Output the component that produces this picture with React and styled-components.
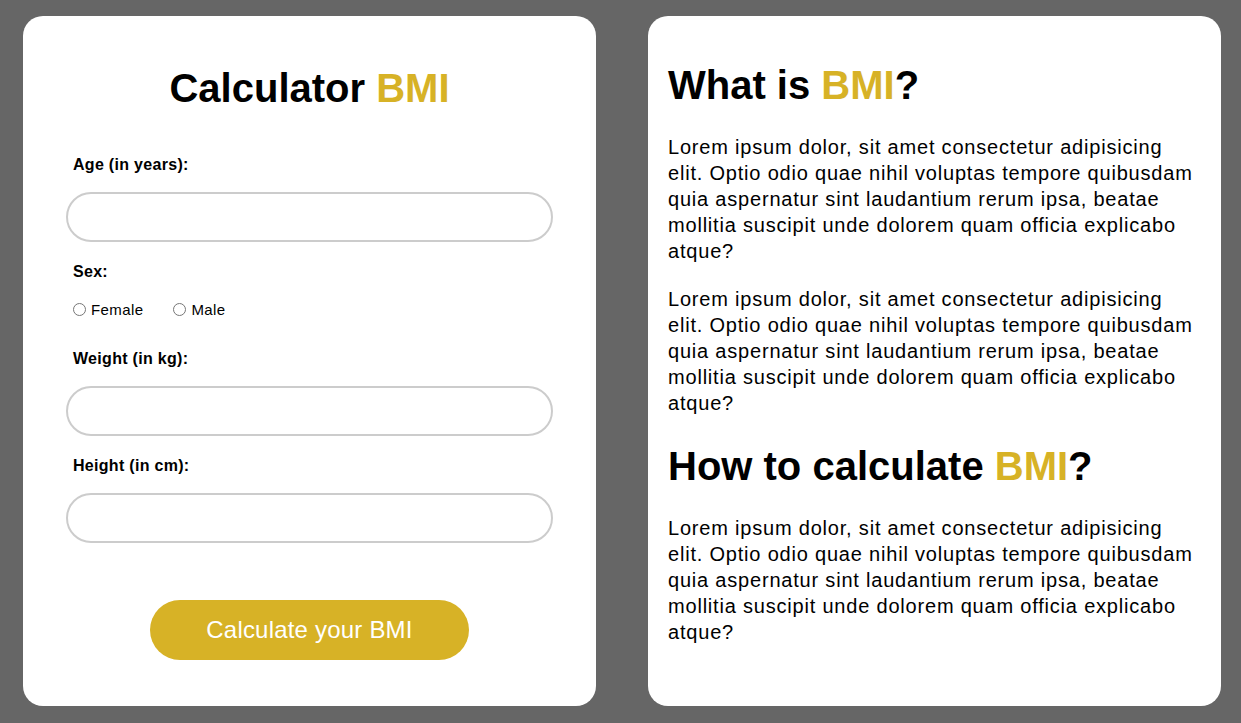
import React, { useState } from "react";
import styled, { createGlobalStyle } from "styled-components";

const GlobalStyle = createGlobalStyle`
  html, body {
    margin: 0;
    padding: 0;
    background: #666666;
    font-family: "Liberation Sans", Arial, sans-serif;
    color: #000;
  }
  * {
    box-sizing: border-box;
  }
`;

const GOLD = "#d7b226";

const lorem =
  "Lorem ipsum dolor, sit amet consectetur adipisicing elit. Optio odio quae nihil voluptas tempore quibusdam quia aspernatur sint laudantium rerum ipsa, beatae mollitia suscipit unde dolorem quam officia explicabo atque?";

const App = () => {
  const [sex, setSex] = useState("");

  return (
    <>
      <GlobalStyle />
      <Page>
        <Card as="form" onSubmit={(e) => e.preventDefault()}>
          <Title>
            Calculator <Accent>BMI</Accent>
          </Title>

          <Field>
            <Label htmlFor="age">Age (in years):</Label>
            <Input id="age" type="number" />
          </Field>

          <Field>
            <Label as="span">Sex:</Label>
            <RadioRow>
              <RadioOption>
                <input
                  type="radio"
                  name="sex"
                  checked={sex === "female"}
                  onChange={() => setSex("female")}
                />
                Female
              </RadioOption>
              <RadioOption>
                <input
                  type="radio"
                  name="sex"
                  checked={sex === "male"}
                  onChange={() => setSex("male")}
                />
                Male
              </RadioOption>
            </RadioRow>
          </Field>

          <Field>
            <Label htmlFor="weight">Weight (in kg):</Label>
            <Input id="weight" type="number" />
          </Field>

          <Field>
            <Label htmlFor="height">Height (in cm):</Label>
            <Input id="height" type="number" />
          </Field>

          <SubmitButton type="submit">Calculate your BMI</SubmitButton>
        </Card>

        <Card $info>
          <Heading>
            What is <Accent>BMI</Accent>?
          </Heading>
          <Text>{lorem}</Text>
          <Text>{lorem}</Text>
          <Heading>
            How to calculate <Accent>BMI</Accent>?
          </Heading>
          <Text>{lorem}</Text>
        </Card>
      </Page>
    </>
  );
};

const Page = styled.main`
  display: grid;
  grid-template-columns: 1fr 1fr;
  gap: 52px;
  height: 100vh;
  padding: 16px 20px 17px 23px;
`;

const Card = styled.section`
  min-width: 0;
  background: #fff;
  border-radius: 20px;
  padding: ${(p) => (p.$info ? "19px 20px 1px" : "49px 43px 1px")};
`;

const Accent = styled.span`
  color: ${GOLD};
`;

const Title = styled.h1`
  margin: 0 0 44px;
  font-size: 40px;
  line-height: 46px;
  font-weight: 700;
  text-align: center;
`;

const Field = styled.div`
  margin-bottom: 20px;
`;

const Label = styled.label`
  display: block;
  padding-left: 7px;
  margin-bottom: 18px;
  font-size: 16px;
  line-height: 19px;
  font-weight: 700;
  letter-spacing: 0.3px;
`;

const Input = styled.input`
  display: block;
  width: 100%;
  height: 50px;
  padding: 0 20px;
  border: 2px solid #cccccc;
  border-radius: 25px;
  font-family: inherit;
  font-size: 18px;
  outline: none;
  appearance: textfield;
  &::-webkit-inner-spin-button,
  &::-webkit-outer-spin-button {
    -webkit-appearance: none;
    margin: 0;
  }
`;

const RadioRow = styled.div`
  display: flex;
  align-items: center;
  gap: 30px;
  height: 20px;
  margin-bottom: 30px;
  padding-left: 7px;
`;

const RadioOption = styled.label`
  display: flex;
  align-items: center;
  gap: 5px;
  font-size: 15px;
  letter-spacing: 0.4px;
  color: #000;
  input {
    width: 13px;
    height: 13px;
    margin: 0;
  }
`;

const SubmitButton = styled.button`
  display: block;
  width: 319px;
  height: 60px;
  margin: 57px auto 0;
  border: none;
  border-radius: 30px;
  background: ${GOLD};
  color: #fff;
  font-family: inherit;
  font-size: 24px;
  letter-spacing: 0.2px;
  cursor: pointer;
`;

const Heading = styled.h2`
  margin: 26.8px 0 26px;
  font-size: 40px;
  line-height: 46px;
  font-weight: 700;
`;

const Text = styled.p`
  margin: 22px 0;
  font-size: 20px;
  line-height: 26px;
  letter-spacing: 0.8px;
`;

export default App;
